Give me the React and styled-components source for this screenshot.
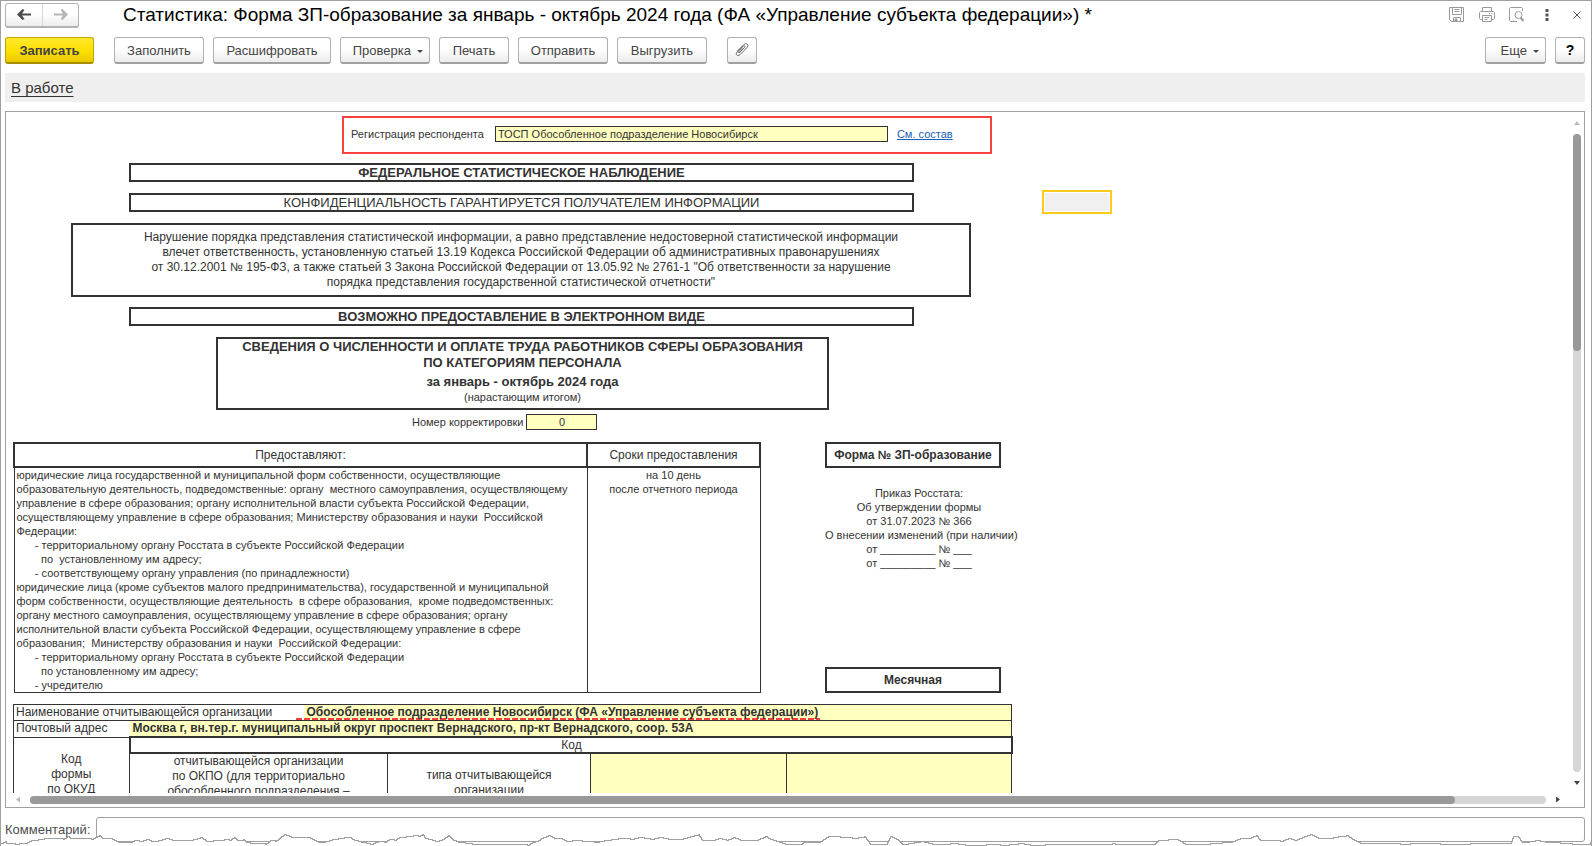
import React from 'react';
import styled, { createGlobalStyle, css } from 'styled-components';

const GlobalStyle = createGlobalStyle`
  *, *::before, *::after {
    box-sizing: border-box;
  }
  body {
    margin: 0;
    background: #fff;
    color: #333;
    font-family: 'Liberation Sans', Arial, sans-serif;
    font-size: 13px;
  }
  button, input {
    font-family: inherit;
    color: inherit;
  }
`;

const Window = styled.div`
  position: relative;
  display: flex;
  flex-direction: column;
  height: 100vh;
  margin-right: 1px;
  padding: 1px 6px 0 4px;
  border: 1px solid #a0a0a0;
  border-bottom: 0;
  overflow: hidden;
`;

const TitleBar = styled.header`
  display: flex;
  align-items: center;
  height: 26px;
`;

const NavGroup = styled.div`
  display: flex;
  flex: none;
  height: 25px;
  margin-right: 44px;
  border: 1px solid #b3b3b3;
  border-bottom: 2px solid #b3b3b3;
  border-radius: 3px;
  background: linear-gradient(#fff 45%, #ececec);
`;

const NavButton = styled.button`
  display: flex;
  align-items: center;
  justify-content: center;
  width: 36px;
  padding: 0;
  border: 0;
  background: none;
  color: ${(p) => (p.disabled ? '#b5b5b5' : '#4d4d4d')};
  & + & {
    border-left: 1px solid #d9d9d9;
  }
`;

const Title = styled.h1`
  flex: 1;
  margin: 0;
  color: #000;
  font-size: 19px;
  font-weight: normal;
  line-height: 24px;
  white-space: nowrap;
`;

const WindowTools = styled.div`
  display: flex;
  align-items: center;
  gap: 14px;
`;

const IconButton = styled.button`
  display: flex;
  align-items: center;
  justify-content: center;
  width: 16px;
  height: 18px;
  padding: 0;
  border: 0;
  background: none;
  color: ${(p) => (p.$dark ? '#555' : '#9a9a9a')};
`;

const Toolbar = styled.div`
  display: flex;
  flex: none;
  gap: 9px;
  height: 27px;
  margin-top: 9px;
`;

const primary = css`
  border-color: #c2a600;
  border-bottom-color: #a58d00;
  background: linear-gradient(#ffe92e, #fddf00 55%, #ecc900);
  font-weight: bold;
`;

const Button = styled.button`
  display: flex;
  align-items: center;
  justify-content: center;
  width: ${(p) => p.$width}px;
  padding: 0;
  border: 1px solid #b0b0b0;
  border-bottom: 2px solid #a0a0a0;
  border-radius: 3px;
  background: linear-gradient(#fff 45%, #ececec);
  color: #444;
  font-size: 13px;
  ${(p) => p.$primary && primary}
`;

const MenuButton = styled(Button)`
  justify-content: flex-end;
  gap: 6px;
  padding-right: 6px;
`;

const HelpButton = styled(Button)`
  color: #000;
  font-size: 14px;
  font-weight: bold;
`;

const Gap = styled.span`
  width: 2px;
`;

const Spacer = styled.span`
  flex: 1;
`;

const Caret = styled.span`
  margin-top: 2px;
  border: 3px solid transparent;
  border-top-color: #444;
  border-bottom: 0;
`;

const StatusBar = styled.div`
  flex: none;
  height: 29px;
  margin-top: 9px;
  padding: 6px;
  background: #efefef;
  line-height: 17px;
`;

const StatusLink = styled.a`
  color: #333;
  font-size: 15px;
  text-underline-offset: 3px;
`;

const Document = styled.main`
  display: grid;
  flex: 1;
  grid-template-columns: minmax(0, 1fr) 20px;
  grid-template-rows: minmax(0, 1fr) 14px;
  min-height: 0;
  margin-top: 9px;
  border: 1px solid #a0a0a0;
`;

const Sheet = styled.div`
  overflow: hidden;
  padding: 4px 0 0 7px;
`;

const Row = styled.div`
  display: flex;
  align-items: center;
  margin-left: ${(p) => p.$indent || 0}px;
  margin-bottom: ${(p) => p.$after || 0}px;
`;

const RespondentRow = styled.div`
  display: flex;
  align-items: center;
  width: 650px;
  height: 38px;
  margin: 0 0 9px 329px;
  padding: 0 7px 2px;
  border: 2px solid #f94141;
  font-size: 11px;
`;

const RespondentInput = styled.input`
  width: 393px;
  height: 16px;
  margin: 0 9px 0 11px;
  padding: 0 2px;
  border: 1px solid #333;
  background: #ffffc0;
  font-size: 11px;
`;

const Link = styled.a`
  color: #1a5fb4;
`;

const Box = styled.div`
  width: ${(p) => p.$width}px;
  padding: ${(p) => p.$pad || 0}px 0;
  border: 2px solid #333;
  font-size: ${(p) => p.$size || 13}px;
  font-weight: ${(p) => (p.$bold ? 'bold' : 'normal')};
  line-height: 15px;
  text-align: center;
`;

const SelectedCell = styled.div`
  width: 70px;
  height: 24px;
  margin: -3px 0 -2px 128px;
  padding: 1px;
  border: 2px solid #ffca18;
  background: #f0f0f0 content-box;
`;

const FormTitle = styled.div`
  width: 613px;
  height: 73px;
  border: 2px solid #333;
  font-size: 13px;
  font-weight: bold;
  line-height: 16px;
  text-align: center;
`;

const Period = styled.div`
  margin-top: 2px;
  line-height: 18px;
`;

const Note = styled.div`
  font-size: 11px;
  font-weight: normal;
  line-height: 13px;
`;

const CorrectionRow = styled(Row)`
  font-size: 11px;
`;

const CorrectionInput = styled.input`
  width: 71px;
  height: 16px;
  margin-left: 3px;
  padding: 0;
  border: 1px solid #333;
  background: #ffffc0;
  font-size: 11px;
  text-align: center;
`;

const Columns = styled.div`
  display: flex;
  height: 251px;
  margin-bottom: 11px;
`;

const TermsTable = styled.table`
  width: 748px;
  border-collapse: collapse;
  table-layout: fixed;
  font-size: 11px;
  line-height: 14px;
  th {
    height: 24px;
    padding: 0;
    border: 2px solid #333;
    font-size: 12px;
    font-weight: normal;
  }
  td {
    padding: 0 0 0 2px;
    border: 1px solid #333;
    vertical-align: top;
    white-space: pre;
  }
  td + td {
    padding: 0;
    text-align: center;
  }
`;

const FormInfo = styled.div`
  display: flex;
  flex-direction: column;
  width: 176px;
  margin-left: 64px;
`;

const InfoBox = styled.div`
  height: 26px;
  border: 2px solid #333;
  font-size: 12px;
  font-weight: bold;
  line-height: 22px;
  text-align: center;
`;

const Orders = styled.div`
  flex: 1;
  width: 188px;
  padding-top: 18px;
  font-size: 11px;
  line-height: 14px;
  text-align: center;
  white-space: pre;
`;

const OrgTable = styled.table`
  width: 998px;
  border-collapse: collapse;
  table-layout: fixed;
  font-size: 12px;
  line-height: 15px;
  td {
    height: 16px;
    padding: 0 0 0 2px;
    border: 1px solid #333;
    white-space: nowrap;
  }
`;

const LabelCell = styled.td`
  && {
    border-right: 0;
  }
`;

const ValueCell = styled.td`
  && {
    padding-left: 3px;
    border-left: 0;
    background: #ffffc0;
    font-weight: bold;
  }
`;

const OrgName = styled.span`
  display: inline-block;
  margin: 0 0 -1px -11px;
  padding: 0 2px 0 11px;
  background: repeating-linear-gradient(90deg, #f94141 0 6px, transparent 6px 8px) 0 100% / 100% 2px no-repeat;
`;

const CodeHead = styled.td`
  && {
    height: 15px;
    border: 2px solid #333;
    line-height: 14px;
    text-align: center;
  }
`;

const CodeCell = styled.td`
  && {
    height: 59px;
    padding: 0;
    text-align: center;
    vertical-align: ${(p) => (p.$top ? 'top' : 'middle')};
    white-space: pre;
    background: ${(p) => (p.$input ? '#ffffc0' : 'none')};
  }
`;

const ScrollV = styled.div`
  display: flex;
  flex-direction: column;
  align-items: center;
  padding: 9px 0 8px 6px;
`;

const ScrollH = styled.div`
  display: flex;
  align-items: center;
  padding: 0 4px 1px 10px;
`;

const Track = styled.div`
  flex: 1;
  display: flex;
  border-radius: 4px;
  background: #d6d6d6;
  ${(p) => (p.$vertical ? 'flex-direction: column; width: 8px; margin: 9px 0;' : 'height: 8px; margin: 0 10px;')}
`;

const Thumb = styled.div`
  flex: 0 0 ${(p) => p.$size}%;
  border-radius: 4px;
  background: #999;
`;

const Arrow = styled.button`
  width: ${(p) => (p.$side ? 4 : 6)}px;
  height: ${(p) => (p.$side ? 6 : 4)}px;
  padding: 0;
  border: 0;
  background: ${(p) => (p.disabled ? '#bbb' : '#444')};
  clip-path: polygon(${(p) => p.$shape});
`;

const CommentRow = styled.div`
  display: flex;
  flex: none;
  height: 38px;
  padding-top: 9px;
  font-size: 13px;
  line-height: 25px;
  color: #4d4d4d;
`;

const CommentInput = styled.input`
  flex: 1;
  height: 25px;
  margin-left: 5px;
  border: 1px solid #a0a0a0;
  border-radius: 3px;
  background: #fff;
`;

const TornEdge = styled.svg`
  position: absolute;
  left: -1px;
  bottom: 0;
  width: calc(100% + 3px);
  height: 12px;
  pointer-events: none;
`;

const TERMS = `юридические лица государственной и муниципальной форм собственности, осуществляющие
образовательную деятельность, подведомственные: органу  местного самоуправления, осуществляющему
управление в сфере образования; органу исполнительной власти субъекта Российской Федерации,
осуществляющему управление в сфере образования; Министерству образования и науки  Российской
Федерации:
      - территориальному органу Росстата в субъекте Российской Федерации
        по  установленному им адресу;
      - соответствующему органу управления (по принадлежности)
юридические лица (кроме субъектов малого предпринимательства), государственной и муниципальной
форм собственности, осуществляющие деятельность  в сфере образования,  кроме подведомственных:
органу местного самоуправления, осуществляющему управление в сфере образования; органу
исполнительной власти субъекта Российской Федерации, осуществляющему управление в сфере
образования;  Министерству образования и науки  Российской Федерации:
      - территориальному органу Росстата в субъекте Российской Федерации
        по установленному им адресу;
      - учредителю`;

const ORDERS = `Приказ Росстата:
Об утверждении формы
от 31.07.2023 № 366
О внесении изменений (при наличии)
от _________ № ___
от _________ № ___`;

// x, y pairs of the ragged bottom edge
const TEAR = [
  0, 9, 5, 7, 6, 9, 15, 10, 19, 9, 25, 9, 31, 6, 44, 4, 63, 5, 67, 2, 70, 4, 91, 5, 97, 2, 99, 1, 102, 4, 112, 5,
  118, 8, 129, 8, 134, 6, 139, 7, 146, 5, 151, 7, 158, 6, 165, 4, 172, 6, 193, 5, 200, 3, 206, 7, 213, 6, 224, 5,
  229, 6, 234, 3, 237, 6, 243, 5, 246, 8, 250, 9, 265, 10, 270, 6, 275, 7, 280, 3, 284, 0, 291, 3, 300, 3, 310, 4,
  318, 8, 325, 7, 332, 5, 344, 3, 349, 3, 354, 6, 361, 8, 370, 10, 378, 7, 384, 8, 389, 5, 394, 6, 399, 3, 406, 2,
  413, 1, 418, 2, 422, 0, 425, 4, 435, 7, 442, 5, 448, 1, 453, 6, 458, 8, 472, 10, 500, 10, 527, 11, 532, 8, 538, 6,
  543, 3, 548, 1, 554, 4, 560, 4, 566, 7, 572, 6, 582, 7, 594, 8, 604, 6, 618, 4, 630, 5, 638, 3, 650, 5, 658, 3,
  668, 5, 680, 5, 690, 2, 698, 0, 702, 6, 712, 6, 718, 4, 726, 6, 733, 3, 740, 6, 750, 6, 758, 5, 765, 2, 770, 5,
  776, 7, 785, 10, 801, 10, 803, 8, 820, 7, 828, 2, 840, 3, 852, 4, 864, 2, 870, 10, 886, 10, 890, 2, 898, 6, 902, 10,
  920, 7, 932, 10, 950, 9, 965, 11, 986, 10, 1000, 11, 1018, 9, 1030, 11, 1045, 10, 1060, 10, 1095, 10, 1112, 9,
  1115, 10, 1134, 10, 1154, 10, 1158, 6, 1168, 5, 1178, 6, 1185, 10, 1210, 9, 1222, 8, 1232, 7, 1240, 4, 1248, 4, 1256, 1,
  1260, 6, 1280, 7, 1288, 4, 1294, 6, 1304, 2, 1310, 0, 1318, 4, 1328, 4, 1338, 2, 1346, 1, 1354, 6, 1360, 9, 1400, 10,
  1410, 9, 1440, 10, 1470, 9, 1510, 10, 1513, 2, 1518, 3, 1522, 8, 1535, 6, 1545, 8, 1560, 9, 1572, 10, 1589, 10, 1591, 6, 1593, 6,
];

// whole-pixel steps, so that the line stays crisp and jagged
const tearPath = () => {
  let d = `M${TEAR[0]} ${TEAR[1]}`;
  for (let i = 2; i < TEAR.length; i += 2) {
    const [x0, y0, x1, y1] = TEAR.slice(i - 2, i + 2);
    const steps = Math.abs(y1 - y0) || 1;
    for (let s = 1; s <= steps; s++) {
      const x = Math.round(x0 + ((x1 - x0) * s) / steps);
      d += `H${x}V${y0 + Math.sign(y1 - y0) * s}`;
    }
  }
  return d;
};

const ArrowIcon = ({ flip }) => (
  <svg width="14" height="11" viewBox="0 0 14 11" fill="currentColor">
    <path d={flip ? 'M0 4.5H9L6.5 1L8.5 0L14 5.5L8.5 11L6.5 10L9 6.5H0Z' : 'M14 4.5H5L7.5 1L5.5 0L0 5.5L5.5 11L7.5 10L5 6.5H14Z'} />
  </svg>
);

const SaveIcon = () => (
  <svg width="16" height="16" viewBox="0 0 16 16" fill="none" stroke="currentColor">
    <path d="M1.5 .5H14.5V14.5H2.5L.5 12.5V.5H2M3.5 .5V7.5H12.5V.5M5.5 2.5H10.5M5.5 4.5H10.5M4.5 14.5V10.5H11.5V14.5" />
    <path d="M6 12H8V14H6Z" fill="currentColor" />
  </svg>
);

const PrintIcon = () => (
  <svg width="16" height="16" viewBox="0 0 16 16" fill="none" stroke="currentColor">
    <path d="M3.5 4V.5H12.5V4M3.5 12.5H1.5L.5 11.5V5.5L1.5 4.5H14.5L15.5 5.5V11.5L14.5 12.5H12.5M3.5 8.5H12.5V14.5H3.5ZM5.5 10.5H10.5M5.5 12.5H8.5M10 6.5H11M12.5 6.5H13.5" />
  </svg>
);

const PreviewIcon = () => (
  <svg width="16" height="16" viewBox="0 0 16 16" fill="none" stroke="currentColor">
    <path d="M8 14.5H1.5L.5 13.5V1.5L1.5 .5H12.5L13.5 1.5V4" />
    <circle cx="9.5" cy="8" r="3.5" />
    <path d="M11.5 10.5L14.5 14" strokeWidth="2" />
  </svg>
);

const DotsIcon = () => (
  <svg width="4" height="12" viewBox="0 0 4 12" fill="currentColor">
    <path d="M.5 0h3v3h-3zM.5 4.5h3v3h-3zM.5 9h3v3h-3z" />
  </svg>
);

const CloseIcon = () => (
  <svg width="8" height="8" viewBox="0 0 8 8" stroke="currentColor">
    <path d="M.5 .5L7.5 7.5M7.5 .5L.5 7.5" />
  </svg>
);

const ClipIcon = () => (
  <svg width="14" height="14" viewBox="0 0 14 14" fill="none" stroke="#666">
    <path d="M4 10L9.5 4.5C10.8 3.2 9.3 1.9 8.1 3.1L2.2 9C-.1 11.3 2.6 14 4.9 11.7L11.7 4.9C14.7 1.9 11.4 -1 8.6 1.8L2.5 7.9" />
    <path d="M4 10C3.4 9.6 3.6 8.8 4.2 8.2L8 4.4" />
  </svg>
);

export default function App() {
  return (
    <>
      <GlobalStyle />
      <Window>
        <TitleBar>
          <NavGroup>
            <NavButton aria-label="Назад"><ArrowIcon /></NavButton>
            <NavButton aria-label="Вперед" disabled><ArrowIcon flip /></NavButton>
          </NavGroup>
          <Title>Статистика: Форма ЗП-образование за январь - октябрь 2024 года (ФА «Управление субъекта федерации») *</Title>
          <WindowTools>
            <IconButton aria-label="Сохранить"><SaveIcon /></IconButton>
            <IconButton aria-label="Печать"><PrintIcon /></IconButton>
            <IconButton aria-label="Просмотр"><PreviewIcon /></IconButton>
            <IconButton aria-label="Меню" $dark><DotsIcon /></IconButton>
            <IconButton aria-label="Закрыть" $dark><CloseIcon /></IconButton>
          </WindowTools>
        </TitleBar>

        <Toolbar>
          <Button $width={89} $primary>Записать</Button>
          <Gap />
          <Button $width={90}>Заполнить</Button>
          <Button $width={118}>Расшифровать</Button>
          <MenuButton $width={90}>Проверка <Caret /></MenuButton>
          <Button $width={70}>Печать</Button>
          <Button $width={90}>Отправить</Button>
          <Button $width={90}>Выгрузить</Button>
          <Gap />
          <Button $width={30} aria-label="Файлы"><ClipIcon /></Button>
          <Spacer />
          <MenuButton $width={61}>Еще <Caret /></MenuButton>
          <HelpButton $width={30}>?</HelpButton>
        </Toolbar>

        <StatusBar>
          <StatusLink href="#status">В работе</StatusLink>
        </StatusBar>

        <Document>
          <Sheet>
            <RespondentRow>
              <label htmlFor="respondent">Регистрация респондента</label>
              <RespondentInput id="respondent" defaultValue="ТОСП Обособленное подразделение Новосибирск" />
              <Link href="#members">См. состав</Link>
            </RespondentRow>
            <Row $indent={116} $after={11}>
              <Box $width={785} $bold>ФЕДЕРАЛЬНОЕ СТАТИСТИЧЕСКОЕ НАБЛЮДЕНИЕ</Box>
            </Row>
            <Row $indent={116} $after={11}>
              <Box $width={785}>КОНФИДЕНЦИАЛЬНОСТЬ ГАРАНТИРУЕТСЯ ПОЛУЧАТЕЛЕМ ИНФОРМАЦИИ</Box>
              <SelectedCell />
            </Row>
            <Row $indent={58} $after={10}>
              <Box $width={900} $size={12} $pad={5}>
                Нарушение порядка представления статистической информации, а равно представление недостоверной статистической информации<br />
                влечет ответственность, установленную статьей 13.19 Кодекса Российской Федерации об административных правонарушениях<br />
                от 30.12.2001 № 195-ФЗ, а также статьей 3 Закона Российской Федерации от 13.05.92 № 2761-1 "Об ответственности за нарушение<br />
                порядка представления государственной статистической отчетности"
              </Box>
            </Row>
            <Row $indent={116} $after={11}>
              <Box $width={785} $bold>ВОЗМОЖНО ПРЕДОСТАВЛЕНИЕ В ЭЛЕКТРОННОМ ВИДЕ</Box>
            </Row>
            <Row $indent={203} $after={4}>
              <FormTitle>
                СВЕДЕНИЯ О ЧИСЛЕННОСТИ И ОПЛАТЕ ТРУДА РАБОТНИКОВ СФЕРЫ ОБРАЗОВАНИЯ<br />
                ПО КАТЕГОРИЯМ ПЕРСОНАЛА
                <Period>за январь - октябрь 2024 года</Period>
                <Note>(нарастающим итогом)</Note>
              </FormTitle>
            </Row>
            <CorrectionRow $indent={399} $after={12}>
              <label htmlFor="correction">Номер корректировки</label>
              <CorrectionInput id="correction" defaultValue="0" />
            </CorrectionRow>

            <Columns>
              <TermsTable>
                <colgroup>
                  <col width="573" />
                  <col />
                </colgroup>
                <thead>
                  <tr>
                    <th>Предоставляют:</th>
                    <th>Сроки предоставления</th>
                  </tr>
                </thead>
                <tbody>
                  <tr>
                    <td>{TERMS}</td>
                    <td>{'на 10 день\nпосле отчетного периода'}</td>
                  </tr>
                </tbody>
              </TermsTable>
              <FormInfo>
                <InfoBox>Форма № ЗП-образование</InfoBox>
                <Orders>{ORDERS}</Orders>
                <InfoBox>Месячная</InfoBox>
              </FormInfo>
            </Columns>

            <OrgTable>
              <colgroup>
                <col width="116" />
                <col width="174" />
                <col width="84" />
                <col width="203" />
                <col width="196" />
                <col width="225" />
              </colgroup>
              <tbody>
                <tr>
                  <LabelCell colSpan={2}>Наименование отчитывающейся организации</LabelCell>
                  <ValueCell colSpan={4}>
                    <OrgName>Обособленное подразделение Новосибирск (ФА «Управление субъекта федерации»)</OrgName>
                  </ValueCell>
                </tr>
                <tr>
                  <LabelCell>Почтовый адрес</LabelCell>
                  <ValueCell colSpan={5}>Москва г, вн.тер.г. муниципальный округ проспект Вернадского, пр-кт Вернадского, соор. 53А</ValueCell>
                </tr>
                <tr>
                  <CodeCell rowSpan={2}>{'Код\nформы\nпо ОКУД'}</CodeCell>
                  <CodeHead colSpan={5}>Код</CodeHead>
                </tr>
                <tr>
                  <CodeCell colSpan={2} $top>{'отчитывающейся организации\nпо ОКПО (для территориально\nобособленного подразделения –'}</CodeCell>
                  <CodeCell>{'типа отчитывающейся\nорганизации'}</CodeCell>
                  <CodeCell $input />
                  <CodeCell $input />
                </tr>
              </tbody>
            </OrgTable>
          </Sheet>
          <ScrollV>
            <Arrow aria-label="Вверх" disabled $shape="50% 0, 100% 100%, 0 100%" />
            <Track $vertical><Thumb $size={34} /></Track>
            <Arrow aria-label="Вниз" $shape="0 0, 100% 0, 50% 100%" />
          </ScrollV>
          <ScrollH>
            <Arrow aria-label="Влево" disabled $side $shape="0 50%, 100% 0, 100% 100%" />
            <Track><Thumb $size={94} /></Track>
            <Arrow aria-label="Вправо" $side $shape="0 0, 100% 50%, 0 100%" />
          </ScrollH>
        </Document>

        <CommentRow>
          <label htmlFor="comment">Комментарий:</label>
          <CommentInput id="comment" />
        </CommentRow>

        <TornEdge viewBox="0 0 1593 12" preserveAspectRatio="none" shapeRendering="crispEdges" aria-hidden="true">
          <path d={`${tearPath()}V12H0Z`} fill="#fff" />
          <path d={tearPath()} fill="none" stroke="#a0a0a0" />
        </TornEdge>
      </Window>
    </>
  );
}
